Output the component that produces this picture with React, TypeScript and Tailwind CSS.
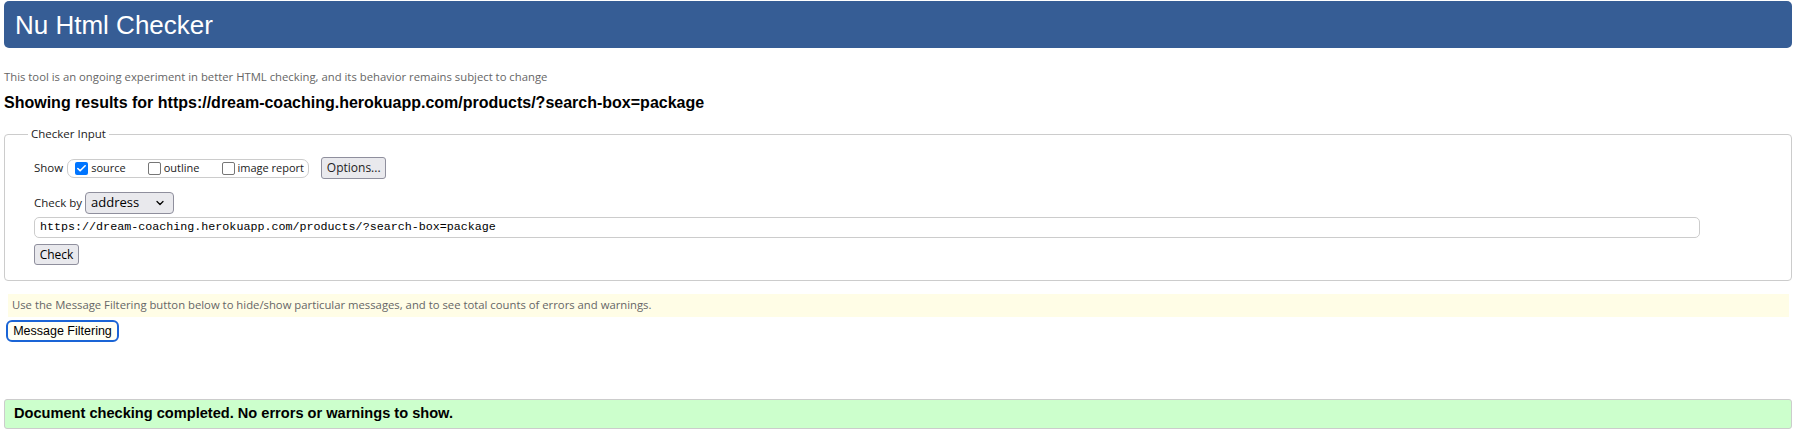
import { Check, ChevronDown } from 'lucide-react';

const URL = 'https://dream-coaching.herokuapp.com/products/?search-box=package';

function Box({ checked, label }: { checked?: boolean; label: string }) {
  return (
    <label className="flex items-center gap-[3px]">
      {checked ? (
        <span className="w-[13px] h-[13px] rounded-[2px] bg-[#0075ff] flex items-center justify-center">
          <Check className="w-[11px] h-[11px] text-white" strokeWidth={3.5} />
        </span>
      ) : (
        <span className="w-[13px] h-[13px] rounded-[2px] border border-[#767676] bg-white" />
      )}
      <span>{label}</span>
    </label>
  );
}

export default function App() {
  const ui = "font-['Open_Sans',sans-serif]";
  return (
    <div className="w-[1801px] h-[435px] bg-white font-['Liberation_Sans',Arial,sans-serif] text-black overflow-hidden pt-[1px]">
      {/* Header */}
      <div className="ml-[4px] mr-[9px] h-[47px] rounded-[5px] bg-[#365d95] flex items-center pl-[11px]">
        <h1 className="text-[26px] text-white leading-none">Nu Html Checker</h1>
      </div>

      <p className={`${ui} ml-[4px] mt-[21px] text-[11.3px] text-[#666] leading-[16px]`}>
        This tool is an ongoing experiment in better HTML checking, and its behavior remains subject to change
      </p>
      <h2 className="ml-[4px] mt-[8px] text-[16px] font-bold leading-[20px]">Showing results for {URL}</h2>

      {/* Checker input */}
      <fieldset className="ml-[4px] mr-[9px] mt-[13px] border border-[#ccc] rounded-[4px] px-[29px] pb-[15px]">
        <legend className={`${ui} ml-[-6px] px-[3px] text-[11.5px] leading-[16px] text-[#222]`}>Checker Input</legend>

        <div className={`${ui} text-[11.5px] text-[#222]`}>
          <div className="flex items-center mt-[15px] h-[22px]">
            <span className="mr-[4px]">Show</span>
            <div className="h-[19px] w-[242px] border border-[#ccc] rounded-[7px] flex items-center pl-[7px] text-[11px]">
              <Box checked label="source" />
              <span className="w-[22px]" />
              <Box label="outline" />
              <span className="w-[22px]" />
              <Box label="image report" />
            </div>
            <button className="ml-[12px] h-[22px] w-[65px] border border-[#8f8f9d] rounded-[3px] bg-[#e9e9ed] text-[12px]">
              Options...
            </button>
          </div>

          <div className="flex items-center mt-[13px] h-[22px]">
            <span className="mr-[3px]">Check by</span>
            <div className="h-[22px] w-[89px] border border-[#8f8f9d] rounded-[4px] bg-[#e9e9ed] flex items-center justify-between pl-[5px] pr-[7px] text-[13px] text-black">
              <span>address</span>
              <ChevronDown className="w-[12px] h-[12px]" strokeWidth={2.5} />
            </div>
          </div>
        </div>

        <div className="mt-[3px] h-[21px] w-[1666px] border border-[#ccc] rounded-[5px] flex items-center pl-[5px] font-['Liberation_Mono',monospace] text-[11.7px] text-black">
          {URL}
        </div>

        <button className={`${ui} mt-[6px] h-[21px] w-[45px] border border-[#8f8f9d] rounded-[3px] bg-[#e9e9ed] text-[12px] text-black flex items-center justify-center`}>
          Check
        </button>
      </fieldset>

      {/* Filtering note */}
      <div className={`${ui} mt-[13px] ml-[8px] mr-[12px] h-[23px] bg-[#fffde6] flex items-center pl-[4px] text-[11.3px] text-[#666]`}>
        Use the Message Filtering button below to hide/show particular messages, and to see total counts of errors and warnings.
      </div>
      <button className="ml-[6px] mt-[3px] h-[22px] w-[113px] border-2 border-[#1a64d6] rounded-[6px] bg-[#fffff4] text-[12.5px] text-black leading-none">
        Message Filtering
      </button>

      {/* Result */}
      <div className="ml-[4px] mr-[9px] mt-[57px] h-[30px] border border-[#ccc] rounded-[3px] bg-[#ccffcc] flex items-center pl-[9px] text-[14.6px] font-bold">
        Document checking completed. No errors or warnings to show.
      </div>
    </div>
  );
}
